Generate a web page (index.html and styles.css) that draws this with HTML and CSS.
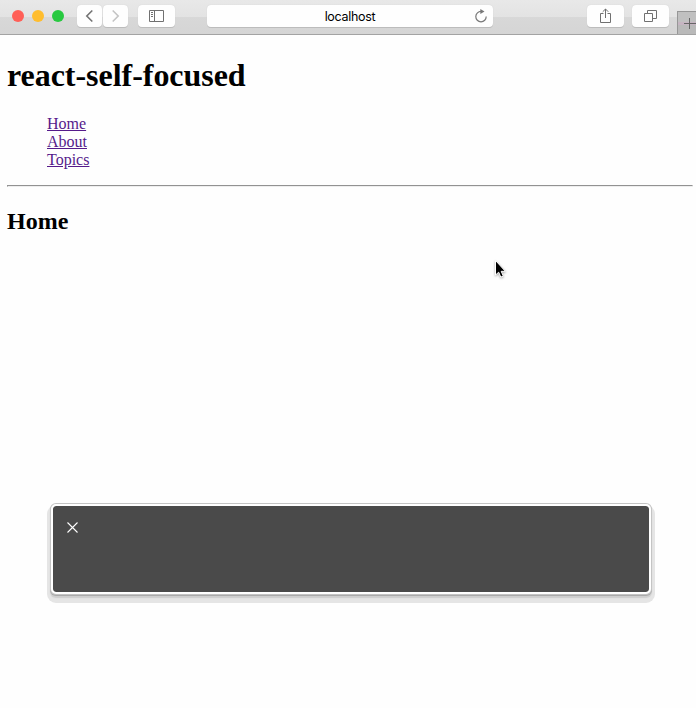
FILE: index.html
```html
<!DOCTYPE html>
<html lang="en">
<head>
<meta charset="utf-8">
<title>react-self-focused</title>
<link rel="stylesheet" href="styles.css">
</head>
<body>
<header class="toolbar">
  <div class="lights"><i class="light red"></i><i class="light yellow"></i><i class="light green"></i></div>
  <div class="nav">
    <span class="btn small"><svg width="25" height="22" viewBox="0 0 25 22"><path d="M15.3 5.5 9.8 11l5.5 5.5" stroke="#737373" stroke-width="1.6"/></svg></span>
    <span class="btn small"><svg width="25" height="22" viewBox="0 0 25 22"><path d="m9.7 5.5 5.5 5.5-5.5 5.5" stroke="#c4c4c4" stroke-width="1.6"/></svg></span>
  </div>
  <span class="btn sidebar"><svg width="37" height="22" viewBox="0 0 37 22"><path d="M11.5 5.5h14v11h-14zM16.5 5.5v11M13 7.5h2M13 9.5h2M13 11.5h2" stroke="#707070"/></svg></span>
  <div class="address"><span>localhost</span>
    <svg class="reload" width="16" height="16" viewBox="0 0 16 16"><path d="M8.2 3.4A5.2 5.2 0 1 0 13.2 8.5" stroke="#777" stroke-width="1.2"/><path d="M7.3 1v5l4.2-2.5z" fill="#777"/></svg>
  </div>
  <span class="btn share"><svg width="37" height="22" viewBox="0 0 37 22"><path d="M16.5 8.5h-3v9h10v-9h-3M18.5 13V4M15.7 6.8l2.8-2.8 2.8 2.8" stroke="#707070"/></svg></span>
  <span class="btn tabs"><svg width="37" height="22" viewBox="0 0 37 22"><path d="M12.5 8.5h8v8h-8zM15.5 8.5v-3h9v8h-4" stroke="#707070"/></svg></span>
  <span class="newtab"><svg width="18" height="22" viewBox="0 0 18 22"><path d="M6 11.5h12M11.5 6v11" stroke="#666"/></svg></span>
</header>
<main class="page">
  <h1>react-self-focused</h1>
  <ul class="links">
    <li><a href="#home">Home</a></li>
    <li><a href="#about">About</a></li>
    <li><a href="#topics">Topics</a></li>
  </ul>
  <hr>
  <h2>Home</h2>
</main>
<aside class="caption-panel"><svg width="11" height="11" viewBox="0 0 11 11"><path d="m.5.5 10 10m0-10-10 10" stroke="#fff" stroke-width="1.1"/></svg></aside>
<svg class="cursor" width="16" height="22" viewBox="0 0 16 22"><path d="M2.5 1.5v14.5l3.2-2.8 2.1 4.9 2.5-1-2.1-4.8h4.2z" fill="#000" stroke="#fff"/></svg>
</body>
</html>
```
FILE: styles.css
```css
* { box-sizing: border-box; }
body {
  margin: 0;
  height: 708px;
  overflow: hidden;
  background: #fefefe;
  color: #000;
  font: 16px/18px "Liberation Serif", "Times New Roman", serif;
}
svg { display: block; fill: none; }
.toolbar {
  display: flex;
  height: 35px;
  padding: 5px 0 0 12px;
  border-bottom: 1px solid #a3a3a3;
  background: linear-gradient(#e8e8e8, #e3e3e3 17px, #d8d8d8 17px, #d5d5d5);
}
.lights { display: flex; gap: 8px; padding-top: 5px; width: 65px; }
.light { width: 12px; height: 12px; border-radius: 50%; }
.red { background: #ff5f57; }
.yellow { background: #ffbd2e; }
.green { background: #28c940; }
.nav { display: flex; gap: 1px; }
.btn, .address {
  height: 22px;
  border-radius: 4px;
  background: #fefefe;
  box-shadow: 0 1px 0 #bcbcbc, 0 0 1px #c8c8c8;
}
.btn { width: 37px; }
.small { width: 25px; }
.sidebar { margin-left: 10px; }
.address {
  display: flex;
  align-items: center;
  justify-content: center;
  position: relative;
  width: 286px;
  margin-left: 32px;
  padding-top: 1px;
  font: 12.5px/22px "Inter", "Liberation Sans", sans-serif;
  letter-spacing: -0.3px;
}
.reload { position: absolute; right: 4px; top: 3px; }
.share { margin-left: 94px; }
.tabs { margin-left: 8px; }
.newtab {
  width: 19px;
  height: 23px;
  margin: 6px 0 0 8px;
  border: solid #969696;
  border-width: 1px 0 0 1px;
  background: linear-gradient(#c0c0c0 10px, #c6b5c2 10px, #c6b5c2 13px, #b9b9b9 13px);
}
.page { padding: 0 3px 0 7px; }
h1 { margin: 22px 0 21px; font-size: 32px; line-height: 37px; letter-spacing: -0.04px; }
.links { margin: 0; padding: 0 0 0 40px; list-style: none; }
a { color: #551a8b; }
hr { margin: 16px 0 20px; border: 1px solid; border-color: #929292 #eee #eee #929292; }
h2 { margin: 0; font-size: 24px; line-height: 28px; }
.caption-panel {
  position: absolute;
  left: 51px;
  top: 504px;
  width: 600px;
  height: 90px;
  padding: 16px 14px;
  border: 2px solid #fff;
  border-radius: 5px;
  background: #4a4a4a;
  background-clip: padding-box;
  box-shadow: 0 0 0 1px #c4c4c4, 0 1px 0 1px #aaa, 0 3px 1px 1px #cecece, 0 5px 0 4px #e5e5e5;
}
.cursor { position: absolute; left: 493px; top: 259px; filter: drop-shadow(0 1px 1px #0005); }
```
